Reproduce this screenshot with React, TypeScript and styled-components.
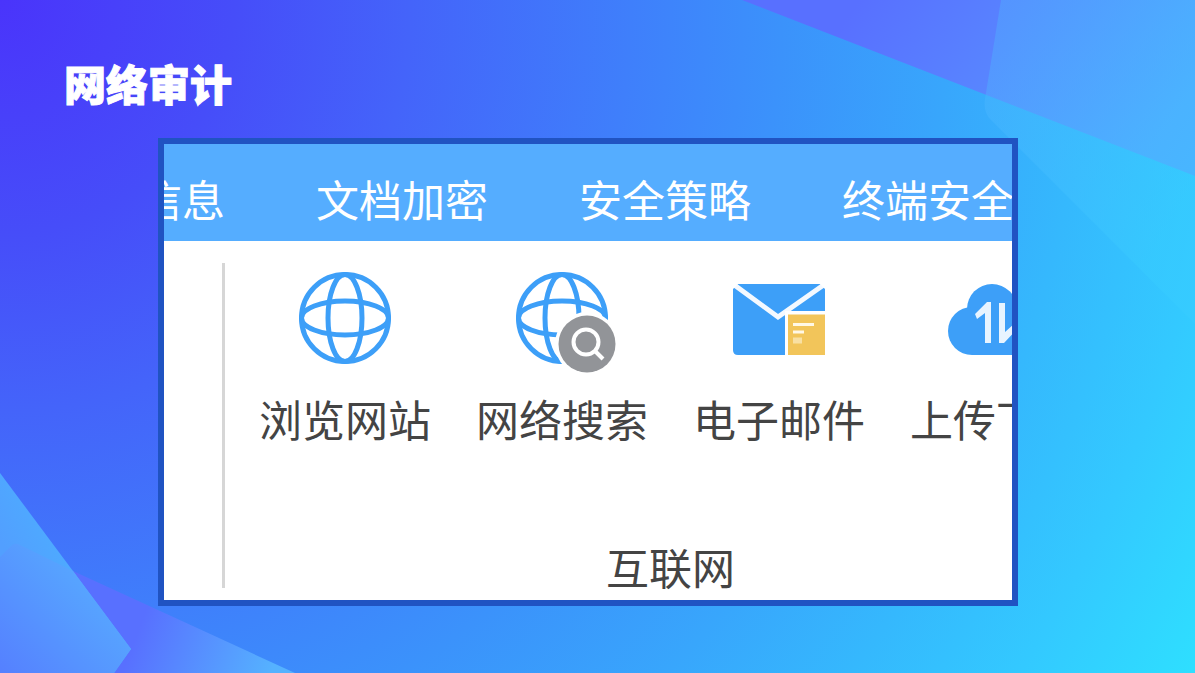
import React from "react";
import styled, { createGlobalStyle } from "styled-components";

const GlobalStyle = createGlobalStyle`
  *, *::before, *::after { box-sizing: border-box; }
  body {
    margin: 0;
    font-family: "Noto Sans CJK SC", "Noto Sans", sans-serif;
  }
`;

const Page = styled.main`
  position: relative;
  min-height: 100vh;
  display: flex;
  flex-direction: column;
  padding: 57px 177px 67px 158px;
  overflow: hidden;
  background: radial-gradient(
    circle farthest-corner at 0 0,
    #4a34fb 0%,
    #464df9 17%,
    #4464fa 30%,
    #3f7ffb 46%,
    #3b92fb 57%,
    #38a6fc 69%,
    #35b8fd 79%,
    #33c9ff 89%,
    #2edfff 100%
  );
`;

const Backdrop = styled.svg`
  position: absolute;
  inset: 0;
  width: 100%;
  height: 100%;
`;

const Title = styled.h1`
  position: relative;
  margin: 0 0 29px -94px;
  color: #fff;
  font-size: 42px;
  line-height: 52px;
  font-weight: 900;
  -webkit-text-stroke: 1px #fff;
`;

const Panel = styled.section`
  position: relative;
  flex: 1;
  display: flex;
  flex-direction: column;
  border: 6px solid #2053c2;
  background: #fff;
  overflow: hidden;
`;

const Nav = styled.nav`
  display: flex;
  flex-shrink: 0;
  gap: 91px;
  height: 97px;
  padding-top: 24px;
  margin-left: -25px;
  background: #55adff;
`;

const NavLink = styled.a`
  flex-shrink: 0;
  color: #fff;
  font-size: 43px;
  line-height: 60px;
  white-space: nowrap;
  text-decoration: none;
`;

const Ribbon = styled.div`
  flex: 1;
  display: flex;
  gap: 34px;
  padding: 22px 0 0 58px;
`;

const Divider = styled.div`
  flex-shrink: 0;
  width: 3px;
  margin-bottom: 12px;
  background: #d6d6d6;
`;

const Group = styled.div`
  flex-shrink: 0;
  display: flex;
  flex-direction: column;
  justify-content: space-between;
  align-items: center;
  padding-bottom: 4px;
`;

const Tools = styled.div`
  display: flex;
  gap: 45px;
`;

const Tool = styled.button`
  width: 172px;
  display: flex;
  flex-direction: column;
  align-items: center;
  padding: 5px 0 0;
  border: 0;
  background: none;
  color: #444;
  font: inherit;
  font-size: 43px;
  line-height: 60px;
  white-space: nowrap;
`;

const ToolIcon = styled.svg`
  display: block;
  width: 120px;
  height: 120px;
`;

const GroupName = styled.h2`
  margin: 0;
  color: #444;
  font-size: 43px;
  line-height: 60px;
  font-weight: 400;
`;

const Globe = () => (
  <g fill="none" stroke="#3d9ff8" strokeWidth="5">
    <circle cx="60" cy="50" r="43.5" />
    <ellipse cx="60" cy="50" rx="17" ry="43.5" />
    <ellipse cx="60" cy="50" rx="43.5" ry="17" />
  </g>
);

const GlobeSearch = () => (
  <>
    <Globe />
    <circle cx="85" cy="76" r="32" fill="#fff" />
    <circle cx="85" cy="76" r="28.5" fill="#929498" />
    <circle cx="84" cy="74" r="12.5" fill="none" stroke="#fff" strokeWidth="4" />
    <path d="M93 83l8 8" stroke="#fff" strokeWidth="4" />
  </>
);

const Mail = () => (
  <>
    <path d="M14 16H106V87H19Q14 87 14 82Z" fill="#3d9ff8" />
    <path d="M14 16L59 49L106 16" fill="none" stroke="#f4f9ff" strokeWidth="5" />
    <path d="M12 14h9l-7 7zM108 14h-9l7 7z" fill="#fff" />
    <path d="M66 43H108V89H66Z" fill="#fff" />
    <path d="M69 46.500H106V87H69Z" fill="#f2c55a" />
    <path d="M74 56.500H95M74 64H85" stroke="#fff8e6" strokeWidth="3" />
    <path d="M74 72.500H83" stroke="#f9e0a2" strokeWidth="6" />
  </>
);

const CloudTransfer = () => (
  <>
    <g fill="#3d9ff8">
      <circle cx="56" cy="41" r="25" />
      <circle cx="36" cy="63" r="24" />
      <circle cx="84" cy="63" r="24" />
      <path d="M36 45H84V87H36Z" />
    </g>
    <path
      d="M55 34H51L39 46L41 51L49 45V75H55ZM63 35H69V64L80 54L83 59L68 75H63Z"
      fill="#e8f4ff"
    />
  </>
);

const navItems = ["信息", "文档加密", "安全策略", "终端安全"];

const tools = [
  { name: "浏览网站", Icon: Globe },
  { name: "网络搜索", Icon: GlobeSearch },
  { name: "电子邮件", Icon: Mail },
  { name: "上传下载", Icon: CloudTransfer },
];

const Shapes = () => (
  <Backdrop viewBox="0 0 1195 673" preserveAspectRatio="none" aria-hidden="true">
    <defs>
      <linearGradient id="violet" gradientUnits="userSpaceOnUse" x1="860" y1="0" x2="1120" y2="190">
        <stop offset="0" stopColor="#5870ff" />
        <stop offset="0.45" stopColor="#5884ff" />
        <stop offset="1" stopColor="#57a0ff" />
      </linearGradient>
      <linearGradient id="sky" gradientUnits="userSpaceOnUse" x1="985" y1="60" x2="1195" y2="180">
        <stop offset="0" stopColor="#4fb4ff" stopOpacity="0.4" />
        <stop offset="1" stopColor="#38ccff" stopOpacity="0.5" />
      </linearGradient>
      <linearGradient id="corner" gradientUnits="userSpaceOnUse" x1="150" y1="600" x2="280" y2="650">
        <stop offset="0" stopColor="#5870ff" />
        <stop offset="1" stopColor="#55b2ff" />
      </linearGradient>
      <linearGradient id="facet" gradientUnits="userSpaceOnUse" x1="0" y1="673" x2="90" y2="590">
        <stop offset="0" stopColor="#5580ff" />
        <stop offset="1" stopColor="#57a4ff" />
      </linearGradient>
      <linearGradient id="edge" gradientUnits="userSpaceOnUse" x1="0" y1="540" x2="50" y2="510">
        <stop offset="0" stopColor="#529fff" />
        <stop offset="1" stopColor="#4dacff" />
      </linearGradient>
    </defs>
    <path d="M742 0H1195V176Z" fill="url(#violet)" />
    <path d="M1001 0L985 99Q983 112 991 120L1195 324V0Z" fill="url(#sky)" />
    <path d="M73 571L295 673H100Z" fill="url(#corner)" />
    <path d="M0 473L131 649L114 673H0Z" fill="url(#edge)" />
    <path d="M0 557L11 546Q15 542 20 545L73 571L131 649L114 673H0Z" fill="url(#facet)" />
  </Backdrop>
);

export default function App() {
  return (
    <>
      <GlobalStyle />
      <Page>
        <Shapes />
        <Title>网络审计</Title>
        <Panel>
          <Nav>
            {navItems.map((item) => (
              <NavLink href="#" key={item}>
                {item}
              </NavLink>
            ))}
          </Nav>
          <Ribbon>
            <Divider />
            <Group>
              <Tools>
                {tools.map(({ name, Icon }) => (
                  <Tool type="button" key={name}>
                    <ToolIcon viewBox="0 0 120 120" aria-hidden="true">
                      <Icon />
                    </ToolIcon>
                    {name}
                  </Tool>
                ))}
              </Tools>
              <GroupName>互联网</GroupName>
            </Group>
          </Ribbon>
        </Panel>
      </Page>
    </>
  );
}
